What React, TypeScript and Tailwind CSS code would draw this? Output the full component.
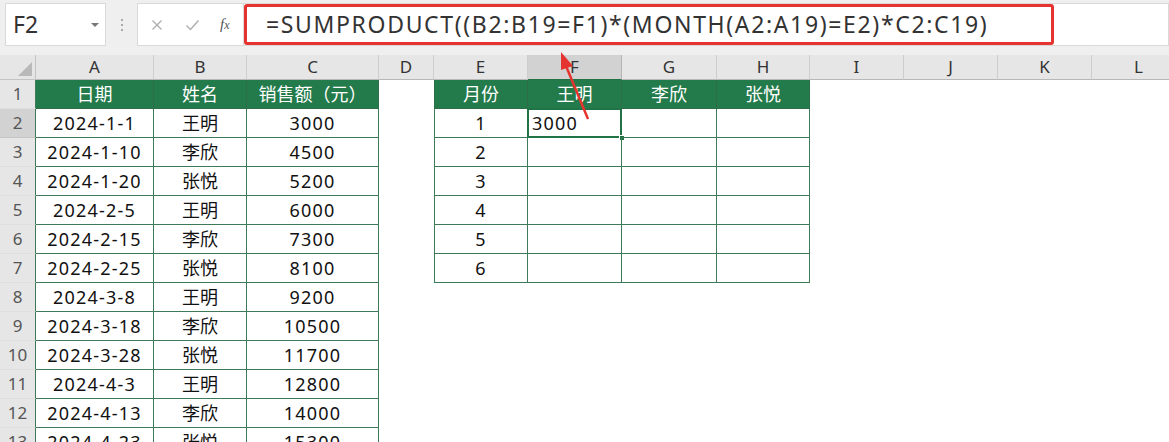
import React from "react";

const cols = ["A", "B", "C", "D", "E", "F", "G", "H", "I", "J", "K", "L"];

const sales = [
  ["2024-1-1", "王明", "3000"],
  ["2024-1-10", "李欣", "4500"],
  ["2024-1-20", "张悦", "5200"],
  ["2024-2-5", "王明", "6000"],
  ["2024-2-15", "李欣", "7300"],
  ["2024-2-25", "张悦", "8100"],
  ["2024-3-8", "王明", "9200"],
  ["2024-3-18", "李欣", "10500"],
  ["2024-3-28", "张悦", "11700"],
  ["2024-4-3", "王明", "12800"],
  ["2024-4-13", "李欣", "14000"],
  ["2024-4-23", "张悦", "15300"],
];

const font = { fontFamily: '"Noto Sans", "Noto Sans CJK SC", sans-serif' };

function cellFor(row: number, col: number) {
  // table 1: A1:C13
  if (col <= 2) {
    if (row === 1) return { text: ["日期", "姓名", "销售额（元）"][col], head: true, table: true };
    return { text: sales[row - 2]?.[col] ?? "", head: false, table: true };
  }
  // table 2: E1:H7
  if (col >= 4 && col <= 7 && row <= 7) {
    if (row === 1) return { text: ["月份", "王明", "李欣", "张悦"][col - 4], head: true, table: true };
    if (col === 4) return { text: String(row - 1), head: false, table: true };
    return { text: "", head: false, table: true };
  }
  return { text: "", head: false, table: false };
}

function FormulaBar() {
  return (
    <div className="flex h-[55px] items-start bg-[#efefef] pt-[3px]">
      <div className="ml-[5px] flex h-[43px] w-[101px] items-center justify-between border border-[#d9d9d9] bg-white pl-[7px] pr-[5px]">
        <span className="text-[23px] text-[#333]">F2</span>
        <svg width="10" height="6" viewBox="0 0 10 6">
          <path d="M1 1h8L5 5z" fill="#777" />
        </svg>
      </div>
      <div className="flex h-[43px] w-[31px] flex-col items-center justify-center gap-[3px]">
        <span className="h-[2px] w-[2px] bg-[#a8a8a8]" />
        <span className="h-[2px] w-[2px] bg-[#a8a8a8]" />
        <span className="h-[2px] w-[2px] bg-[#a8a8a8]" />
      </div>
      <div className="flex h-[43px] w-[106px] items-center border border-r-0 border-[#d9d9d9] bg-white pl-[13px]">
        <svg width="12" height="12" viewBox="0 0 12 12">
          <path d="M1.5 1.5l9 9M10.5 1.5l-9 9" stroke="#b0b0b0" strokeWidth="1.4" />
        </svg>
        <svg className="ml-[22px]" width="15" height="12" viewBox="0 0 15 12">
          <path d="M1.5 6.5l4 4 8-9" stroke="#b0b0b0" strokeWidth="1.5" fill="none" />
        </svg>
        <span className="ml-[20px] text-[15px] italic text-[#555]" style={{ fontFamily: '"Liberation Serif", serif' }}>
          f<span className="text-[12px]">x</span>
        </span>
      </div>
      <div className="flex h-[43px] flex-1 items-stretch border border-[#d9d9d9] bg-white">
        <div className="flex w-[810px] items-center rounded-[3px] border-[3px] border-[#e53430] pl-[19px]">
          <span className="text-[23px] tracking-[1.65px] text-[#333]">
            =SUMPRODUCT((B2:B19=F1)*(MONTH(A2:A19)=E2)*C2:C19)
          </span>
        </div>
      </div>
    </div>
  );
}

function Sheet() {
  const rows = Array.from({ length: 13 }, (_, i) => i + 1);
  return (
    <div className="grid grid-cols-[36px_118px_93px_132px_55px_94px_94px_95px_93px_94px_94px_94px_94px] grid-rows-[25px_repeat(13,29px)] bg-white">
      <div className="relative border-b border-r border-[#c4c4c4] bg-[#e6e6e6]">
        <svg className="absolute bottom-[3px] right-[3px]" width="14" height="14" viewBox="0 0 14 14">
          <path d="M14 0v14H0z" fill="#b9b9b9" />
        </svg>
      </div>
      {cols.map((c) => (
        <div
          key={c}
          className={`flex items-center justify-center border-r border-b text-[17px] text-[#333] ${
            c === "F" ? "border-r-[#b5b5b5] border-b-[#217346] bg-[#d2d2d2]" : "border-r-[#cdcdcd] border-b-[#b8b8b8] bg-[#e6e6e6]"
          }`}
        >
          {c}
        </div>
      ))}
      {rows.map((r) => (
        <React.Fragment key={r}>
          <div
            className={`flex items-center justify-center border-r border-b border-r-[#3e7a58] text-[17px] text-[#555] ${
              r === 2 ? "border-b-[#c6c6c6] bg-[#d2d2d2]" : "border-b-[#dedede] bg-[#e6e6e6]"
            }`}
          >
            {r}
          </div>
          {cols.map((c, ci) => {
            const cell = cellFor(r, ci);
            const selected = r === 2 && c === "F";
            if (!cell.table) return <div key={c} />;
            const latin = /^[0-9-]+$/.test(cell.text) || selected;
            return (
              <div
                key={c}
                className={`relative flex items-center border-r border-b text-[18px] ${ci === 4 ? "border-l" : ""} ${
                  cell.head
                    ? "justify-center border-[#2d6e49] bg-[#237a4a] text-white"
                    : "justify-center border-[#3e7a58] text-[#111]"
                } ${latin ? "tracking-[1.2px]" : ""} ${selected ? "justify-start pl-[4px]" : ""}`}
              >
                {selected ? "3000" : cell.text}
                {selected && (
                  <>
                    <span className="absolute -left-px -top-px h-[calc(100%+2px)] w-[calc(100%+2px)] border-2 border-[#217346]" />
                    <span className="absolute -bottom-[4px] -right-[4px] h-[6px] w-[6px] border border-white bg-[#217346]" />
                  </>
                )}
              </div>
            );
          })}
        </React.Fragment>
      ))}
    </div>
  );
}

export default function App() {
  return (
    <div className="relative h-[442px] w-[1169px] overflow-hidden bg-white" style={font}>
      <FormulaBar />
      <Sheet />
      <svg className="pointer-events-none absolute left-0 top-0" width="1169" height="442">
        <line x1="588" y1="119" x2="566" y2="66" stroke="#e53430" strokeWidth="2.5" />
        <path d="M561 52 L573 66 L561 70 Z" fill="#e53430" />
      </svg>
    </div>
  );
}
